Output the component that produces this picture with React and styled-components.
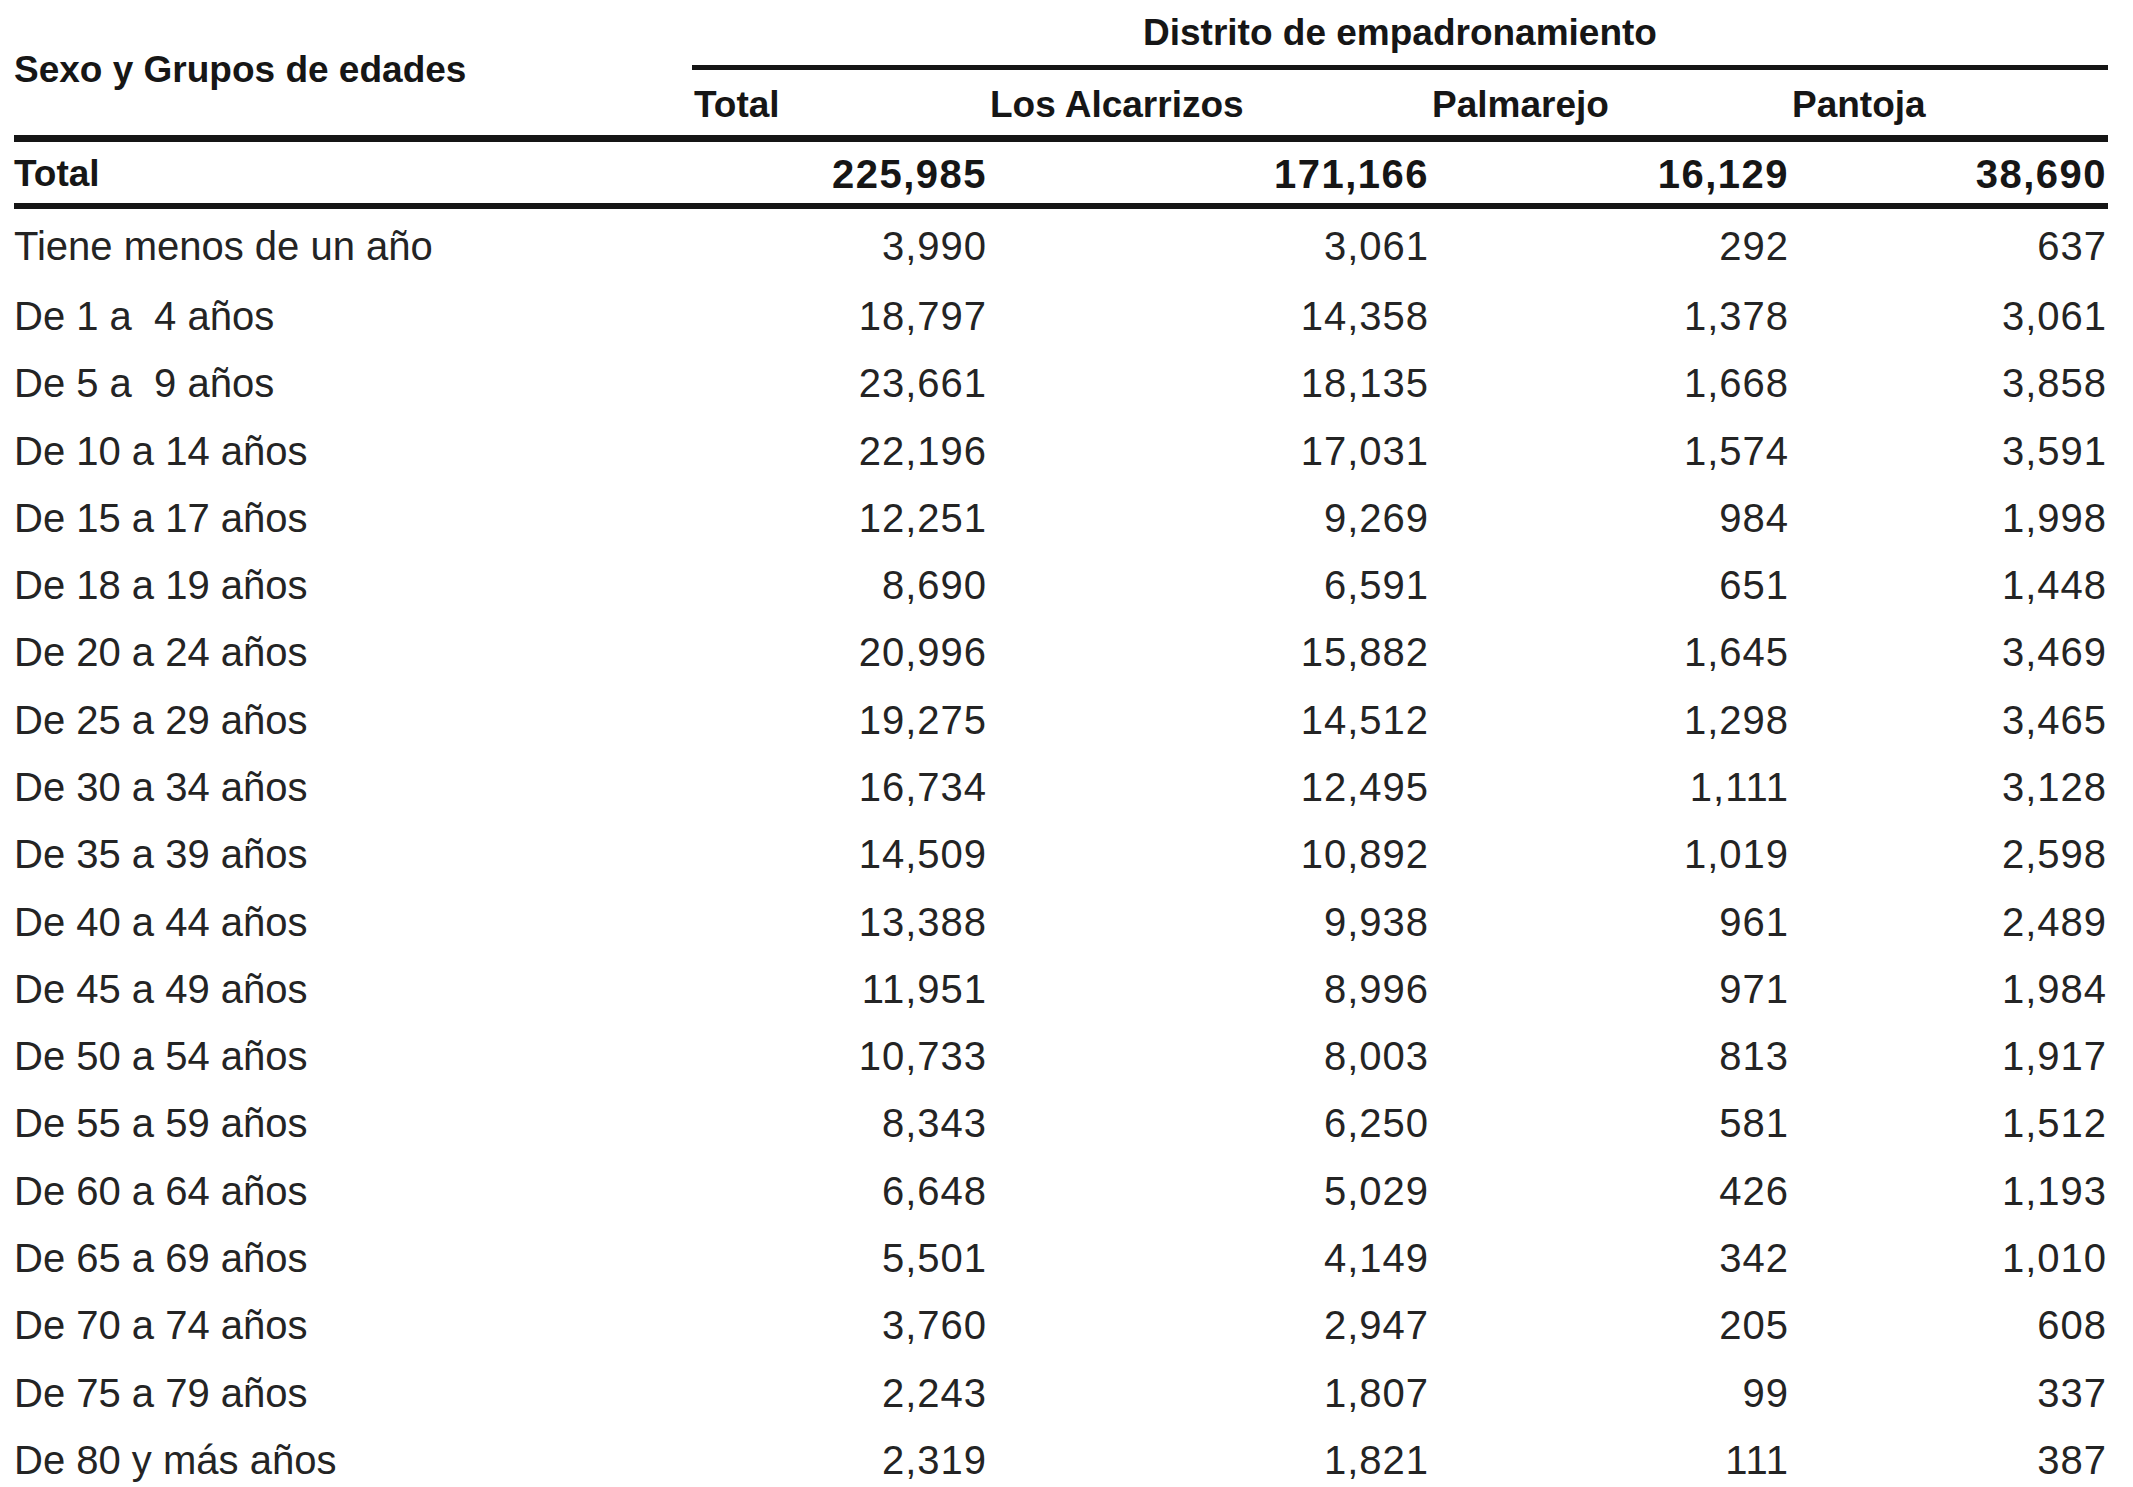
import React from "react";
import styled, { createGlobalStyle } from "styled-components";

const COLS = "678px 296px 442px 360px 318px";

const GlobalStyle = createGlobalStyle`
  html, body {
    margin: 0;
    padding: 0;
    background: #ffffff;
  }
  body {
    font-family: "Liberation Sans", Arial, sans-serif;
    color: #1c1c1c;
  }
`;

const Page = styled.div`
  padding: 0 25px 0 14px;
  width: 2094px;
`;

const Head = styled.div`
  display: grid;
  grid-template-columns: ${COLS};
  grid-template-rows: auto auto;
  border-bottom: 7px solid #151515;
`;

const CornerLabel = styled.div`
  grid-column: 1;
  grid-row: 1 / span 2;
  align-self: center;
  padding-top: 3px;
  font-size: 37px;
  line-height: 37px;
  font-weight: 700;
  color: #161616;
`;

const GroupLabel = styled.div`
  grid-column: 2 / span 4;
  grid-row: 1;
  text-align: center;
  padding: 14px 0;
  border-bottom: 5px solid #151515;
  font-size: 37px;
  line-height: 37px;
  font-weight: 700;
  color: #161616;
`;

const SubLabel = styled.div`
  grid-row: 2;
  padding: 16px 2px 12px;
  font-size: 37px;
  line-height: 37px;
  font-weight: 700;
  color: #161616;
  white-space: nowrap;
`;

const Row = styled.div`
  display: grid;
  grid-template-columns: ${COLS};
  line-height: 40px;
  padding: ${(p) => (p.$first ? "17px 0 16.45px" : "13.65px 0")};
`;

const TotalRow = styled(Row)`
  padding: 12px 0 9px;
  border-bottom: 6px solid #151515;
`;

const Label = styled.div`
  font-size: ${(p) => (p.$bold ? "37px" : "40px")};
  font-weight: ${(p) => (p.$bold ? 700 : 400)};
  color: ${(p) => (p.$bold ? "#161616" : "#242424")};
  white-space: pre;
`;

const Num = styled.div`
  text-align: right;
  padding-right: 1px;
  font-size: 40px;
  font-weight: ${(p) => (p.$bold ? 700 : 400)};
  letter-spacing: ${(p) => (p.$bold ? "1.5px" : "1px")};
  color: ${(p) => (p.$bold ? "#161616" : "#242424")};
`;

const totals = ["225,985", "171,166", "16,129", "38,690"];

const rows = [
  ["Tiene menos de un año", "3,990", "3,061", "292", "637"],
  ["De 1 a  4 años", "18,797", "14,358", "1,378", "3,061"],
  ["De 5 a  9 años", "23,661", "18,135", "1,668", "3,858"],
  ["De 10 a 14 años", "22,196", "17,031", "1,574", "3,591"],
  ["De 15 a 17 años", "12,251", "9,269", "984", "1,998"],
  ["De 18 a 19 años", "8,690", "6,591", "651", "1,448"],
  ["De 20 a 24 años", "20,996", "15,882", "1,645", "3,469"],
  ["De 25 a 29 años", "19,275", "14,512", "1,298", "3,465"],
  ["De 30 a 34 años", "16,734", "12,495", "1,111", "3,128"],
  ["De 35 a 39 años", "14,509", "10,892", "1,019", "2,598"],
  ["De 40 a 44 años", "13,388", "9,938", "961", "2,489"],
  ["De 45 a 49 años", "11,951", "8,996", "971", "1,984"],
  ["De 50 a 54 años", "10,733", "8,003", "813", "1,917"],
  ["De 55 a 59 años", "8,343", "6,250", "581", "1,512"],
  ["De 60 a 64 años", "6,648", "5,029", "426", "1,193"],
  ["De 65 a 69 años", "5,501", "4,149", "342", "1,010"],
  ["De 70 a 74 años", "3,760", "2,947", "205", "608"],
  ["De 75 a 79 años", "2,243", "1,807", "99", "337"],
  ["De 80 y más años", "2,319", "1,821", "111", "387"],
];

const districts = ["Total", "Los Alcarrizos", "Palmarejo", "Pantoja"];

function App() {
  return (
    <>
      <GlobalStyle />
      <Page>
        <Head>
          <CornerLabel>Sexo y Grupos de edades</CornerLabel>
          <GroupLabel>Distrito de empadronamiento</GroupLabel>
          {districts.map((d) => (
            <SubLabel key={d}>{d}</SubLabel>
          ))}
        </Head>
        <TotalRow>
          <Label $bold>Total</Label>
          {totals.map((v, i) => (
            <Num $bold key={i}>{v}</Num>
          ))}
        </TotalRow>
        {rows.map((r, idx) => (
          <Row key={r[0]} $first={idx === 0}>
            <Label>{r[0]}</Label>
            {r.slice(1).map((v, i) => (
              <Num key={i}>{v}</Num>
            ))}
          </Row>
        ))}
      </Page>
    </>
  );
}

export default App;
